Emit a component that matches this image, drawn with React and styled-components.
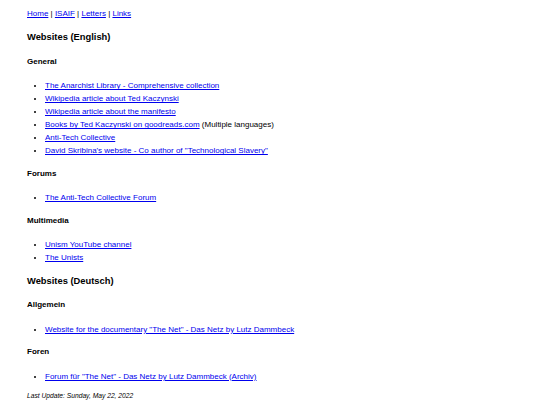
import React from "react";
import styled, { createGlobalStyle } from "styled-components";

const Global = createGlobalStyle`
  html, body { margin: 0; padding: 0; background: #fff; }
  body {
    font-family: "Liberation Sans", Arial, Helvetica, sans-serif;
    font-size: 8px;
    line-height: 1.6;
    color: #000;
  }
`;

const Page = styled.div`
  padding: 0 5%;
  display: flow-root;
`;

const Nav = styled.p`
  margin: 8px 0;
`;

const Link = styled.a`
  color: #0000ee;
  text-decoration: underline;
`;

const Section = styled.h3`
  font-size: 1.17em;
  font-weight: bold;
  margin: 1em 0;
  line-height: ${(p) => p.$lh || "1.6"};
`;

const Sub = styled.h4`
  font-size: 1em;
  font-weight: bold;
  margin: 1.33em 0;
`;

const List = styled.ul`
  margin: 1em 0;
  padding-left: 18px;
  list-style: disc;
`;

const Item = styled.li`
  line-height: 13px;
`;

const Footer = styled.p`
  margin: 8px 0;
  font-size: 6.7px;
  font-style: italic;
`;

const LinkList = ({ items }) => (
  <List>
    {items.map((it, i) => (
      <Item key={i}>
        <Link href="#">{it.text}</Link>
        {it.extra ? ` ${it.extra}` : null}
      </Item>
    ))}
  </List>
);

export default function App() {
  return (
    <>
      <Global />
      <Page>
        <Nav>
          <Link href="#">Home</Link> | <Link href="#">ISAIF</Link> |{" "}
          <Link href="#">Letters</Link> | <Link href="#">Links</Link>
        </Nav>
        <Section>Websites (English)</Section>
        <Sub>General</Sub>
        <LinkList
          items={[
            { text: "The Anarchist Library - Comprehensive collection" },
            { text: "Wikipedia article about Ted Kaczynski" },
            { text: "Wikipedia article about the manifesto" },
            { text: "Books by Ted Kaczynski on goodreads.com", extra: "(Multiple languages)" },
            { text: "Anti-Tech Collective" },
            { text: 'David Skribina\'s website - Co author of "Technological Slavery"' },
          ]}
        />
        <Sub>Forums</Sub>
        <LinkList items={[{ text: "The Anti-Tech Collective Forum" }]} />
        <Sub>Multimedia</Sub>
        <LinkList items={[{ text: "Unism YouTube channel" }, { text: "The Unists" }]} />
        <Section>Websites (Deutsch)</Section>
        <Sub>Allgemein</Sub>
        <LinkList
          items={[{ text: 'Website for the documentary "The Net" - Das Netz by Lutz Dammbeck' }]}
        />
        <Sub>Foren</Sub>
        <LinkList
          items={[{ text: 'Forum für "The Net" - Das Netz by Lutz Dammbeck (Archiv)' }]}
        />
        <Footer>Last Update: Sunday, May 22, 2022</Footer>
      </Page>
    </>
  );
}
